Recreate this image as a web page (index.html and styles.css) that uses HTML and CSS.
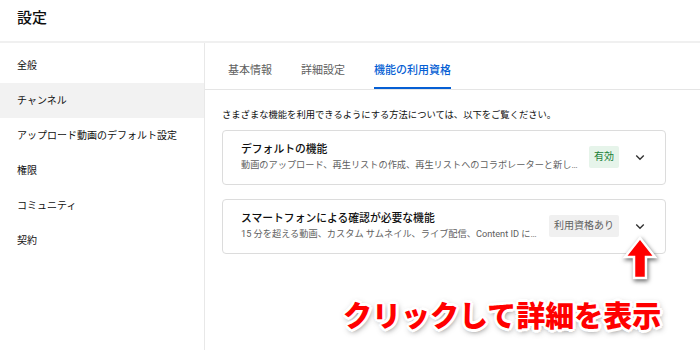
FILE: index.html
```html
<!DOCTYPE html>
<html lang="ja">

<head>
  <meta charset="UTF-8">
  <meta name="viewport" content="width=device-width, initial-scale=1.0">
  <title>設定</title>
  <link rel="stylesheet" href="styles.css">
</head>

<body>
  <div class="page">
    <header class="header">設定</header>

    <div class="layout">
      <nav class="sidebar">
        <a class="nav-item">全般</a>
        <a class="nav-item active">チャンネル</a>
        <a class="nav-item">アップロード動画のデフォルト設定</a>
        <a class="nav-item">権限</a>
        <a class="nav-item">コミュニティ</a>
        <a class="nav-item">契約</a>
      </nav>

      <main class="main">
        <div class="tabs">
          <span class="tab">基本情報</span>
          <span class="tab">詳細設定</span>
          <span class="tab active">機能の利用資格</span>
        </div>

        <div class="content">
          <p class="intro">さまざまな機能を利用できるようにする方法については、以下をご覧ください。</p>

          <div class="card">
            <div class="card-text">
              <div class="card-title">デフォルトの機能</div>
              <div class="card-sub">動画のアップロード、再生リストの作成、再生リストへのコラボレーターと新しいコメントの追加</div>
            </div>
            <span class="badge on">有効</span>
            <svg class="chevron" viewBox="0 0 24 24"><path d="M7 10l5 5 5-5" /></svg>
          </div>

          <div class="card">
            <div class="card-text">
              <div class="card-title">スマートフォンによる確認が必要な機能</div>
              <div class="card-sub">15 分を超える動画、カスタム サムネイル、ライブ配信、Content ID に対する申し立て</div>
            </div>
            <span class="badge">利用資格あり</span>
            <svg class="chevron" viewBox="0 0 24 24"><path d="M7 10l5 5 5-5" /></svg>
          </div>
        </div>
      </main>
    </div>

    <!-- annotation -->
    <svg class="arrow" viewBox="0 0 40 50">
      <polygon points="20,4 35,23 26,23 26,44 14,44 14,23 5,23" />
    </svg>
    <div class="callout">クリックして詳細を表示</div>
  </div>
</body>

</html>
```

FILE: styles.css
```css
* {
  box-sizing: border-box;
}

body {
  margin: 0;
  background: #fff;
  color: #0f0f0f;
  font-family: Roboto, "Noto Sans CJK JP", sans-serif;
}

.page {
  height: 350px;
  overflow: hidden;
  position: relative;
  width: 700px;
}

.header {
  border-bottom: 2px solid #f0f0f0;
  font-size: 15px;
  font-weight: 500;
  height: 43px;
  line-height: 36px;
  padding-left: 17px;
}

.layout {
  display: flex;
  height: 307px;
}

.sidebar {
  border-right: 1px solid #e8e8e8;
  display: flex;
  flex-direction: column;
  flex-shrink: 0;
  padding-top: 5px;
  width: 205px;
}

.nav-item {
  font-size: 10px;
  height: 35px;
  line-height: 35px;
  padding-left: 17px;
  white-space: nowrap;
}

.nav-item.active {
  background: #f2f2f2;
}

.main {
  flex: 1;
  min-width: 0;
}

.tabs {
  border-bottom: 1px solid #e5e5e5;
  display: flex;
  gap: 29px;
  padding-left: 23px;
}

.tab {
  border-bottom: 2px solid transparent;
  color: #606060;
  font-size: 11px;
  line-height: 16px;
  padding: 20px 0 8px;
}

.tab.active {
  border-bottom-color: #065fd4;
  color: #065fd4;
  font-weight: 500;
}

.content {
  display: flex;
  flex-direction: column;
  gap: 14px;
  padding: 18px 34px 0 17px;
}

.intro {
  font-size: 9.3px;
  line-height: 14px;
  margin: 0 0 -6px;
}

.card {
  align-items: center;
  border: 1px solid #dcdcdc;
  border-radius: 4px;
  display: flex;
  height: 55px;
  padding: 0 16px 2px 18px;
}

.card-text {
  flex: 1;
  min-width: 0;
}

.card-title {
  font-size: 10.8px;
  font-weight: 500;
  line-height: 17px;
}

.card-sub {
  color: #606060;
  font-size: 9.2px;
  line-height: 14px;
  overflow: hidden;
  text-overflow: ellipsis;
  white-space: nowrap;
}

.badge {
  background: #f0f0f0;
  border-radius: 2px;
  color: #606060;
  flex-shrink: 0;
  font-size: 10px;
  line-height: 22px;
  margin-left: 8px;
  padding: 0 5px;
}

.badge.on {
  background: #e6f4ea;
  color: #188038;
}

.chevron {
  fill: none;
  flex-shrink: 0;
  height: 18px;
  margin-left: 12px;
  stroke: #303030;
  stroke-width: 1.8;
  width: 18px;
}

.arrow {
  filter: drop-shadow(1px 2px 2px rgba(0, 0, 0, 0.6));
  height: 50px;
  left: 620px;
  position: absolute;
  top: 234px;
  width: 40px;
}

.arrow polygon {
  fill: #f00;
  stroke: #fff;
  stroke-linejoin: miter;
  stroke-width: 2.5;
}

.callout {
  color: #f00;
  font-family: "Noto Sans CJK JP", sans-serif;
  font-size: 29px;
  font-weight: 900;
  left: 343px;
  line-height: 1;
  position: absolute;
  text-shadow:
    2px 0 #fff, -2px 0 #fff, 0 2px #fff, 0 -2px #fff,
    2px 2px #fff, -2px -2px #fff, 2px -2px #fff, -2px 2px #fff,
    3px 0 #fff, -3px 0 #fff, 0 3px #fff, 0 -3px #fff,
    1px 2px 6px rgba(0, 0, 0, 0.7);
  top: 300px;
  white-space: nowrap;
}
```
